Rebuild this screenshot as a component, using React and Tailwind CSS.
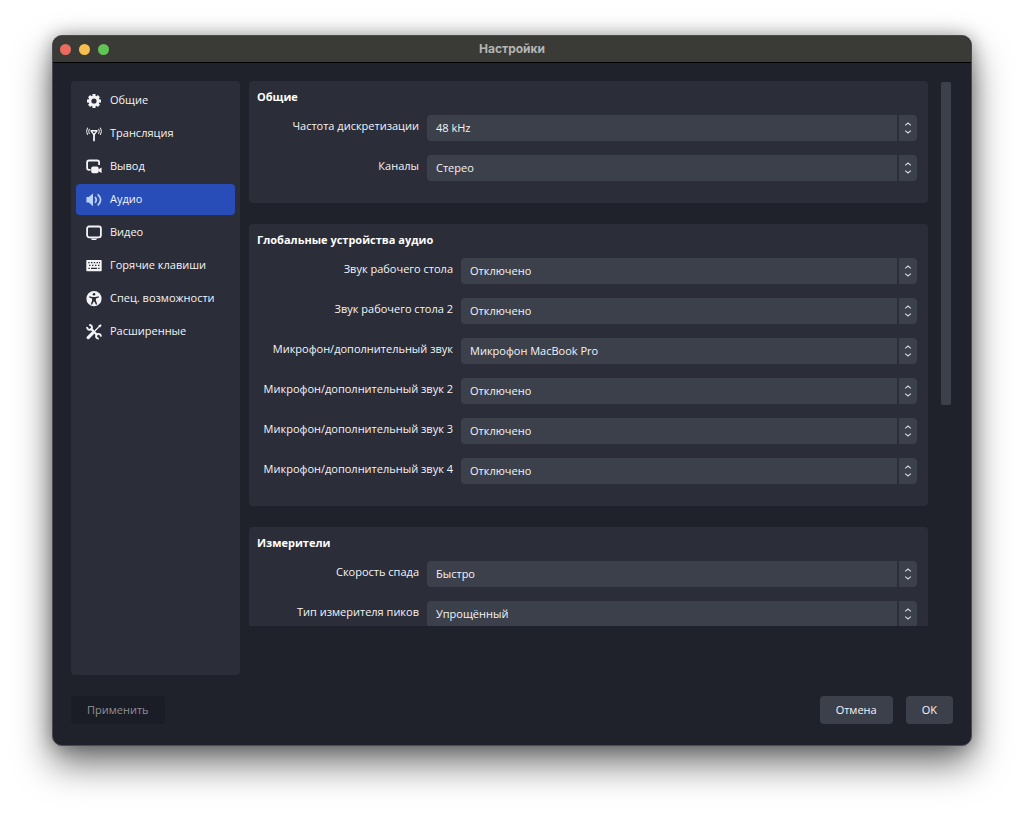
import { useState } from 'react';

const GearIcon = () => (
  <svg viewBox="0 0 16 16" className="h-4 w-4" fill="none" stroke="currentColor">
    <circle cx="8" cy="8" r="4.1" strokeWidth="3" />
    <path
      d="M8 1v2M8 13v2M1 8h2M13 8h2M3.1 3.1l1.5 1.5M11.4 11.4l1.5 1.5M3.1 12.9l1.5-1.5M11.4 4.6l1.5-1.5"
      strokeWidth="3"
    />
  </svg>
);

const AntennaIcon = () => (
  <svg viewBox="0 0 16 16" className="h-4 w-4" fill="none" stroke="currentColor" strokeLinecap="round">
    <path d="M8 14.4V8.2" strokeWidth="1.8" />
    <path d="M5 4.8h6L8 8.8z" strokeWidth="1.4" strokeLinejoin="round" />
    <path d="M3.2 3.2q-1.2 2.2 0 4.4M12.8 3.2q1.2 2.2 0 4.4" strokeWidth="1" />
    <path d="M1.4 2q-1.8 3.4 0 6.6M14.6 2q1.8 3.4 0 6.6" strokeWidth="1" />
  </svg>
);

const OutputIcon = () => (
  <svg viewBox="0 0 16 16" className="h-4 w-4" fill="none" stroke="currentColor">
    <path d="M4.6 10.8H3Q1.1 10.8 1.1 8.9V3.4Q1.1 1.5 3 1.5h8.2q1.9 0 1.9 1.9V6" strokeWidth="1.8" />
    <rect x="5.2" y="7.4" width="7.4" height="6.8" rx="1.8" fill="currentColor" stroke="none" />
    <path d="M12.2 10.6l3.4-2v5.4l-3.4-2z" fill="currentColor" stroke="none" />
  </svg>
);

const AudioIcon = () => (
  <svg viewBox="0 0 16 16" className="h-4 w-4 text-[#b9d0f7]" fill="none" stroke="currentColor" strokeLinecap="round">
    <path d="M.4 5.1h2.4L7 1.4v12.8l-4.2-3.7H.4z" fill="currentColor" stroke="none" />
    <path d="M9.4 5.4q1.8 2.4 0 4.8" strokeWidth="1.7" />
    <path d="M12.2 2.8q4.8 5 0 10" strokeWidth="1.7" />
  </svg>
);

const MonitorIcon = () => (
  <svg viewBox="0 0 16 16" className="h-4 w-4" fill="none" stroke="currentColor">
    <rect x="1.1" y="1.5" width="13.8" height="10.8" rx="2" strokeWidth="1.8" />
    <path d="M4.6 13.6h6.8l-1.4 1.3H6z" fill="currentColor" stroke="none" />
  </svg>
);

const KeyboardIcon = () => (
  <svg viewBox="0 0 16 16" className="h-4 w-4">
    <rect x=".3" y="2" width="15.4" height="11.2" rx=".8" fill="currentColor" />
    <path
      d="M2.2 4.6h1.4M5 4.6h1.4M7.8 4.6h1.4M10.6 4.6H12M13 4.6h1M3 7.4h1.4M6 7.4h1.4M9 7.4h1.4M12 7.4h1.4M2.4 10.4h1.4M5 10.4h6M12.2 10.4h1.4"
      stroke="#2b2d38"
      strokeWidth="1.3"
    />
  </svg>
);

const AccessIcon = () => (
  <svg viewBox="0 0 16 16" className="h-4 w-4">
    <circle cx="8" cy="7.7" r="7.6" fill="currentColor" />
    <circle cx="8" cy="3.3" r="1.3" fill="#2b2d38" />
    <path
      d="M3.4 5.2l3 .9h3.2l3-.9.3 1.2-3 1.1v2l1.3 3.8-1.2.5L8.3 10.4h-.6L6 13.8l-1.2-.5 1.3-3.8v-2l-3-1.1z"
      fill="#2b2d38"
    />
  </svg>
);

const ToolsIcon = () => (
  <svg viewBox="0 0 16 16" className="h-4 w-4" fill="none" stroke="currentColor">
    <path d="M4.6 4.4l6.8 6.8" strokeWidth="2.2" />
    <path d="M1.2 3a2.4 2.4 0 1 0 2-2" strokeWidth="1.9" />
    <path d="M14.8 12.6a2.4 2.4 0 1 0-2 2" strokeWidth="1.9" />
    <path d="M14.4 1.4L8.6 7.2" strokeWidth="1.3" />
    <path d="M15.6 1.2L14.6.2l-2.4 1.5 1.9 1.9z" fill="currentColor" stroke="none" />
    <path d="M6.6 9.2L2.2 13.6" strokeWidth="3.2" strokeLinecap="round" />
  </svg>
);

const sections = [
  { id: 'general', label: 'Общие', Icon: GearIcon },
  { id: 'stream', label: 'Трансляция', Icon: AntennaIcon },
  { id: 'output', label: 'Вывод', Icon: OutputIcon },
  { id: 'audio', label: 'Аудио', Icon: AudioIcon },
  { id: 'video', label: 'Видео', Icon: MonitorIcon },
  { id: 'hotkeys', label: 'Горячие клавиши', Icon: KeyboardIcon },
  { id: 'access', label: 'Спец. возможности', Icon: AccessIcon },
  { id: 'advanced', label: 'Расширенные', Icon: ToolsIcon },
];

const groups = [
  {
    title: 'Общие',
    columns: 'grid-cols-[162px_1fr]',
    fields: [
      { id: 'rate', label: 'Частота дискретизации', value: '48 kHz' },
      { id: 'channels', label: 'Каналы', value: 'Стерео' },
    ],
  },
  {
    title: 'Глобальные устройства аудио',
    columns: 'grid-cols-[196px_1fr]',
    fields: [
      { id: 'desktop1', label: 'Звук рабочего стола', value: 'Отключено' },
      { id: 'desktop2', label: 'Звук рабочего стола 2', value: 'Отключено' },
      { id: 'mic1', label: 'Микрофон/дополнительный звук', value: 'Микрофон MacBook Pro' },
      { id: 'mic2', label: 'Микрофон/дополнительный звук 2', value: 'Отключено' },
      { id: 'mic3', label: 'Микрофон/дополнительный звук 3', value: 'Отключено' },
      { id: 'mic4', label: 'Микрофон/дополнительный звук 4', value: 'Отключено' },
    ],
  },
  {
    title: 'Измерители',
    columns: 'grid-cols-[162px_1fr]',
    fields: [
      { id: 'decay', label: 'Скорость спада', value: 'Быстро' },
      { id: 'peak', label: 'Тип измерителя пиков', value: 'Упрощённый' },
    ],
  },
];

function Field({ field, columns }) {
  return (
    <div className={`grid ${columns} gap-2`}>
      <label htmlFor={field.id} className="text-right leading-[22px] whitespace-nowrap">
        {field.label}
      </label>
      <div className="relative">
        <select
          id={field.id}
          className="block h-[26px] w-full appearance-none rounded bg-[#3c404b] pr-6 pl-[9px] outline-none"
        >
          <option>{field.value}</option>
        </select>
        <div className="pointer-events-none absolute inset-y-0 right-0 flex w-5 items-center justify-center border-l-2 border-[#2b2d38]">
          <svg viewBox="0 0 8 12" className="h-3 w-2" fill="none" stroke="#d5d7dd" strokeWidth="1.2">
            <path d="M1.2 3.4L4 1l2.8 2.4M1.2 8.6L4 11l2.8-2.4" />
          </svg>
        </div>
      </div>
    </div>
  );
}

export default function App() {
  const [active, setActive] = useState('audio');

  return (
    <div className="flex min-h-screen flex-col bg-white px-[52px] pt-[35px] pb-[69px] font-['Open_Sans','Noto_Sans',sans-serif] text-[11px] font-medium text-[#f4f4f6]">
      <div className="flex flex-1 flex-col overflow-hidden rounded-[10px] border border-[#4a4b50] bg-[#1f222b] shadow-[0_18px_36px_rgba(0,0,0,0.55),0_0_18px_rgba(0,0,0,0.3)]">
        {/* Title bar */}
        <header className="relative flex h-[27px] items-center border-b border-black bg-[#3a3a37] px-[7px]">
          <div className="flex gap-2">
            <span className="h-[11px] w-[11px] rounded-full bg-[#ed6a5f]" />
            <span className="h-[11px] w-[11px] rounded-full bg-[#f6be50]" />
            <span className="h-[11px] w-[11px] rounded-full bg-[#61c555]" />
          </div>
          <h1 className="absolute inset-x-0 text-center font-['Inter',sans-serif] text-xs font-bold text-[#b4b4b2]">
            Настройки
          </h1>
        </header>

        <div className="flex flex-1 flex-col px-[18px] pt-[18px] pb-[21px]">
          <div className="flex flex-1 gap-[9px]">
            {/* Sidebar */}
            <nav className="flex w-[169px] shrink-0 flex-col gap-[2px] rounded bg-[#2b2d38] px-[5px] py-1">
              {sections.map(({ id, label, Icon }) => (
                <button
                  key={id}
                  onClick={() => setActive(id)}
                  className={`flex h-[31px] items-center gap-2 rounded px-[10px] whitespace-nowrap ${
                    active === id ? 'bg-[#284cb8]' : ''
                  }`}
                >
                  <Icon />
                  {label}
                </button>
              ))}
            </nav>

            {/* Settings page */}
            <main className="mb-[49px] flex flex-1 gap-[13px] pr-[2px]">
              <div className="relative flex-1 overflow-hidden">
                <div className="absolute inset-0 flex flex-col gap-[21px] overflow-hidden">
                  {groups.map((group) => (
                    <section key={group.title} className="shrink-0 rounded bg-[#2b2d38] pt-[6px] pr-[11px] pb-[22px] pl-2">
                      <h2 className="h-7 leading-5 font-bold text-white">{group.title}</h2>
                      <div className="flex flex-col gap-[14px]">
                        {group.fields.map((field) => (
                          <Field key={field.id} field={field} columns={group.columns} />
                        ))}
                      </div>
                    </section>
                  ))}
                </div>
              </div>
              <div className="mt-px h-[323px] w-[10px] rounded-xs bg-[#3c404b]" />
            </main>
          </div>

          {/* Footer */}
          <footer className="mt-[21px] flex gap-[13px]">
            <button disabled className="mr-auto h-7 rounded bg-[#1a1c26] px-4 text-[#8f9095]">
              Применить
            </button>
            <button className="h-7 rounded bg-[#3c404b] px-4">Отмена</button>
            <button className="h-7 rounded bg-[#3c404b] px-4">OK</button>
          </footer>
        </div>
      </div>
    </div>
  );
}
